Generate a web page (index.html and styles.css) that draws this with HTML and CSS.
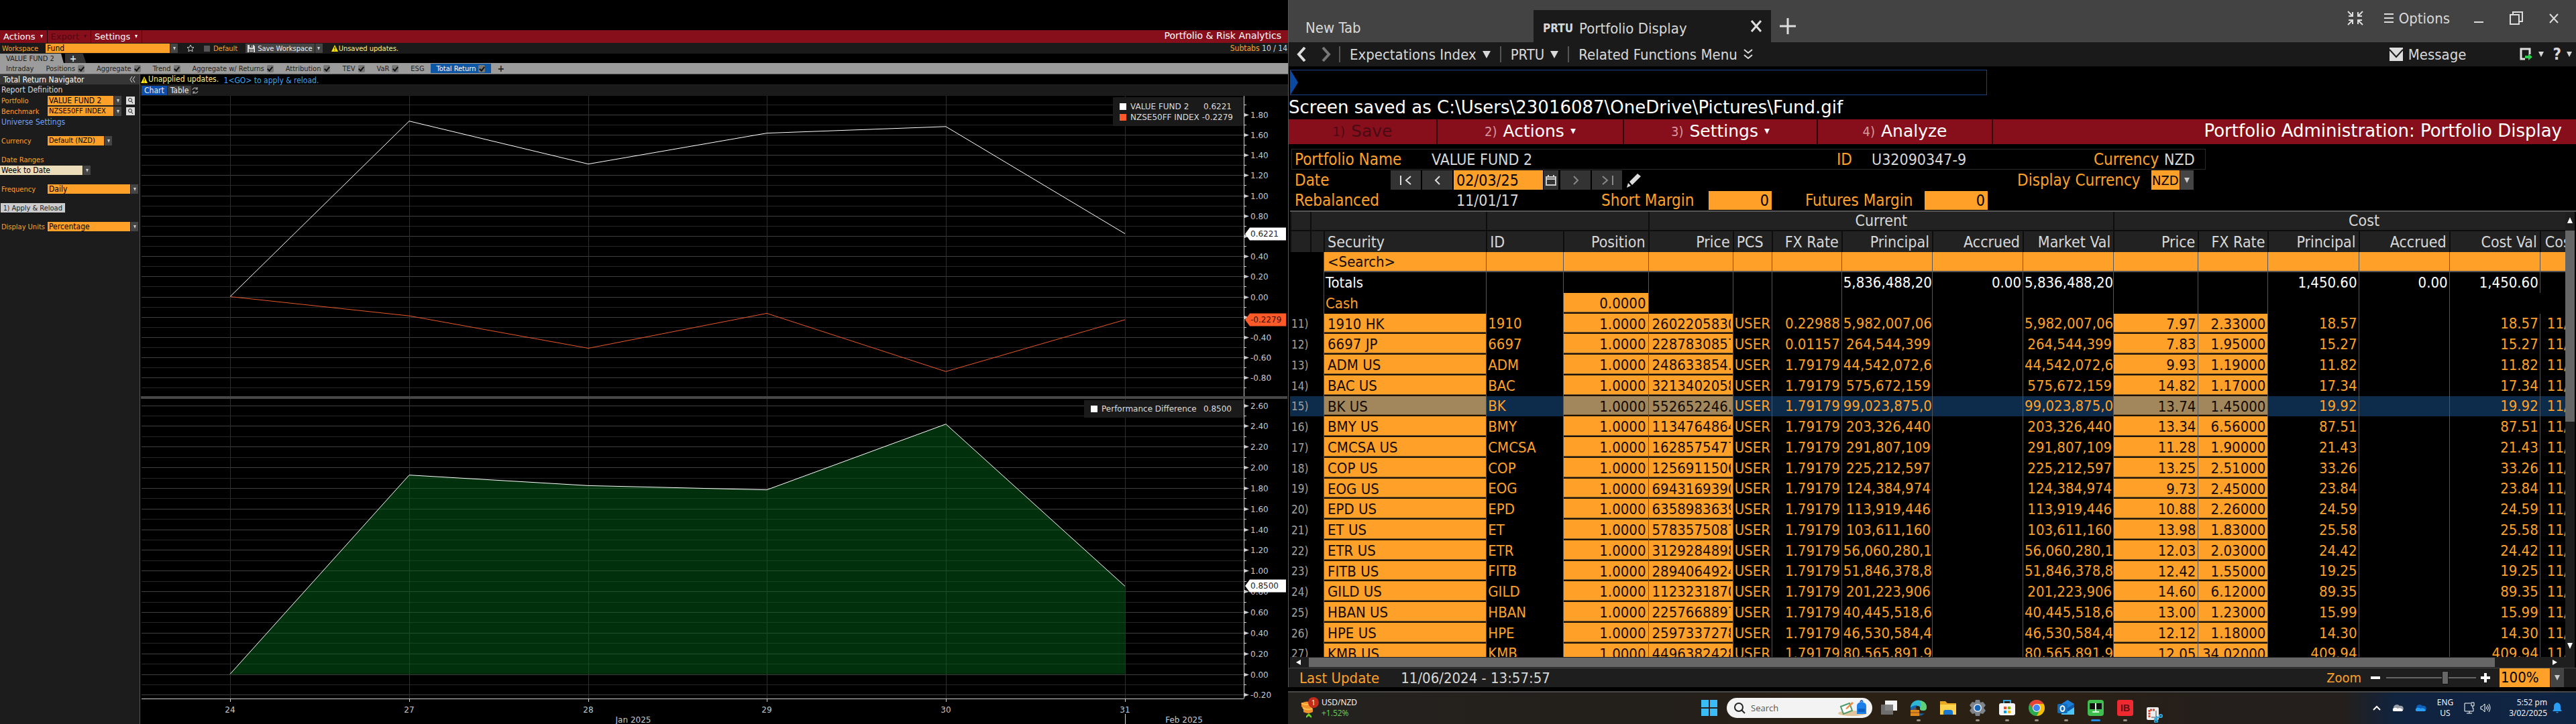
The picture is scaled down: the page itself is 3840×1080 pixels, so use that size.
FILE: index.html
```html
<!DOCTYPE html>
<html lang="en">
<head>
<meta charset="utf-8">
<title>Portfolio &amp; Risk Analytics</title>
<link rel="stylesheet" href="styles.css">
</head>
<body>
<main class="desktop">

<section class="analytics">
  <header class="menubar">
    <button class="menu-item">Actions <i class="caret"></i></button>
    <button class="menu-item menu-item-off" disabled>Export <i class="caret"></i></button>
    <button class="menu-item">Settings <i class="caret"></i></button>
    <h1 class="app-title">Portfolio &amp; Risk Analytics</h1>
  </header>
  <div class="workspace">
    <label class="amber workspace-label" for="workspace">Workspace</label>
    <span class="combo combo-workspace"><select id="workspace"><option>Fund</option></select><i class="drop"></i></span>
    <button class="icon-button star" aria-label="Favourite"><svg width="12" height="12" viewBox="0 0 12 12"><path d="M6 1l1.5 3.3 3.5.4-2.600 2.400.7 3.600L6 9l-3.100 1.700.7-3.600L1 4.700l3.500-.4z" fill="none" stroke="#ccc"/></svg></button>
    <label class="amber default-box"><input type="checkbox" class="tick">Default</label>
    <span class="save-group"><button class="save"><svg width="11" height="11" viewBox="0 0 11 11"><path d="M0 0h9l2 2v9H0z" fill="#ddd"/><path d="M3 0h5v4H3zM2 6h7v5H2z" fill="#444"/><path d="M6 1h1v2H6zM3 7h5v1H3zM3 9h5v1H3z" fill="#ddd"/></svg>Save Workspace</button><i class="drop"></i></span>
    <span class="warning"><svg width="10" height="10" viewBox="0 0 10 10"><path d="M5 0l5 10H0z" fill="#ffe600"/><path d="M4.500 3h1v4h-1zM4.500 8h1v1h-1z" fill="#000"/></svg>Unsaved updates.</span>
    <span class="subtab-count"><span class="amber">Subtabs</span> 10 / 14</span>
  </div>
  <div class="tabs">
    <button class="tab">VALUE FUND 2</button>
    <button class="tab tab-add" aria-label="Add tab">+</button>
  </div>
  <nav class="subtabs">
    <button class="subtab">Intraday</button>
    <button class="subtab">Positions<i class="check"></i></button>
    <button class="subtab">Aggregate<i class="check"></i></button>
    <button class="subtab">Trend<i class="check"></i></button>
    <button class="subtab">Aggregate w/ Returns<i class="check"></i></button>
    <button class="subtab">Attribution<i class="check"></i></button>
    <button class="subtab">TEV<i class="check"></i></button>
    <button class="subtab">VaR<i class="check"></i></button>
    <button class="subtab">ESG</button>
    <button class="subtab subtab-on">Total Return<i class="check"></i></button>
    <button class="subtab subtab-add" aria-label="Add subtab">+</button>
  </nav>
  <div class="workarea">
    <aside class="navigator">
      <h2 class="navigator-title">Total Return Navigator <button class="icon-button" aria-label="Collapse"><svg width="9" height="9" viewBox="0 0 9 9"><path d="M4 0L1 4.500 4 9M8 0L5 4.500 8 9" fill="none" stroke="#ddd"/></svg></button></h2>
      <p class="nav-row">Report Definition</p>
      <div class="nav-row"><label class="amber" for="portfolio">Portfolio</label><span class="combo w-110"><select id="portfolio"><option>VALUE FUND 2</option></select><i class="drop"></i></span><button class="lookup" aria-label="Find portfolio"><svg width="13" height="12" viewBox="0 0 13 12"><circle cx="6" cy="5" r="2.500" fill="none" stroke="#222"/><path d="M8 7l2 3" stroke="#222"/></svg></button></div>
      <div class="nav-row"><label class="amber" for="benchmark">Benchmark</label><span class="combo w-110"><select id="benchmark"><option>NZSE50FF INDEX</option></select><i class="drop"></i></span><button class="lookup" aria-label="Find benchmark"><svg width="13" height="12" viewBox="0 0 13 12"><circle cx="6" cy="5" r="2.500" fill="none" stroke="#222"/><path d="M8 7l2 3" stroke="#222"/></svg></button></div>
      <p class="nav-row"><a href="#universe">Universe Settings</a></p>
      <div class="nav-row spaced"><label class="amber" for="currency">Currency</label><span class="combo w-96"><select id="currency"><option>Default (NZD)</option></select><i class="drop"></i></span></div>
      <div class="nav-row spaced"><label class="amber" for="range">Date Ranges</label></div>
      <div class="nav-row"><span class="combo combo-pale w-135"><select id="range"><option>Week to Date</option></select><i class="drop"></i></span></div>
      <div class="nav-row spaced"><label class="amber" for="frequency">Frequency</label><span class="combo w-135"><select id="frequency"><option>Daily</option></select><i class="drop"></i></span></div>
      <div class="nav-row spaced"><button class="apply"><small>1)</small> Apply &amp; Reload</button></div>
      <div class="nav-row spaced"><label class="amber" for="units">Display Units</label><span class="combo w-135"><select id="units"><option>Percentage</option></select><i class="drop"></i></span></div>
    </aside>
    <div class="report">
      <p class="notice"><span class="warning"><svg width="10" height="10" viewBox="0 0 10 10"><path d="M5 0l5 10H0z" fill="#ffe600"/><path d="M4.500 3h1v4h-1zM4.500 8h1v1h-1z" fill="#000"/></svg>Unapplied updates.</span> <span class="hint">1&lt;GO&gt; to apply &amp; reload.</span></p>
      <div class="views">
        <button class="view view-on">Chart</button><button class="view">Table</button>
        <button class="icon-button" aria-label="Refresh"><svg width="10" height="10" viewBox="0 0 10 10"><path d="M1 4a4 4 0 0 1 7-1.500V0M8.500 3H5.500M9 6a4 4 0 0 1-7 1.500V10M1.500 7h3" fill="none" stroke="#ccc"/></svg></button>
      </div>
      <svg class="chart" id="chart" viewBox="0 0 1711 937" role="img" aria-label="Total return and performance difference"></svg>
    </div>
  </div>
</section>

<section class="right">
  <div class="window">
    <header class="titlebar">
      <button class="wtab">New Tab</button>
      <div class="wtab wtab-on"><b>PRTU</b> <span>Portfolio Display</span>
        <button class="icon-button wtab-close" aria-label="Close tab"><svg width="16" height="18" viewBox="0 0 16 18"><path d="M1 1l14 16M15 1L1 17" stroke="#ddd" stroke-width="3"/></svg></button></div>
      <button class="icon-button add-tab" aria-label="New tab"><svg width="24" height="24" viewBox="0 0 24 24"><path d="M12 0v24M0 12h24" stroke="#ddd" stroke-width="3"/></svg></button>
      <div class="window-tools">
        <button class="icon-button" aria-label="Compact"><svg width="24" height="22" viewBox="0 0 24 22"><path d="M1 1l7 7M23 1l-7 7M1 21l7-7M23 21l-7-7M8 2v6H2M16 2v6h6M8 20v-6H2M16 20v-6h6" fill="none" stroke="#ddd" stroke-width="2"/></svg></button>
        <button class="icon-button options"><svg width="14" height="15" viewBox="0 0 14 15"><path d="M0 1h14M0 7h14M0 13h14" stroke="#ddd" stroke-width="2"/></svg>Options</button>
        <button class="icon-button" aria-label="Minimize"><svg width="14" height="20" viewBox="0 0 14 20"><path d="M0 16h14" stroke="#ddd" stroke-width="2"/></svg></button>
        <button class="icon-button" aria-label="Restore"><svg width="20" height="20" viewBox="0 0 20 20"><path d="M1 5h13v14H1zM5 5V1h14v14h-5" fill="none" stroke="#ddd" stroke-width="2"/></svg></button>
        <button class="icon-button" aria-label="Close"><svg width="14" height="15" viewBox="0 0 14 15"><path d="M1 1l12 13M13 1L1 14" stroke="#ddd" stroke-width="2"/></svg></button>
      </div>
    </header>
    <nav class="toolbar">
      <button class="icon-button" aria-label="Back"><svg width="14" height="22" viewBox="0 0 14 22"><path d="M12 1L3 11l9 10" fill="none" stroke="#ddd" stroke-width="4"/></svg></button>
      <button class="icon-button forward" aria-label="Forward"><svg width="14" height="22" viewBox="0 0 14 22"><path d="M2 1l9 10-9 10" fill="none" stroke="#777" stroke-width="4"/></svg></button>
      <button class="crumb">Expectations Index <i class="caret caret-lg"></i></button>
      <button class="crumb">PRTU <i class="caret caret-lg"></i></button>
      <button class="crumb">Related Functions Menu <svg width="14" height="16" viewBox="0 0 14 16"><path d="M1 1l6 5 6-5M1 9l6 5 6-5" fill="none" stroke="#ddd" stroke-width="2"/></svg></button>
      <div class="toolbar-end">
        <button class="icon-button message"><svg width="20" height="20" viewBox="0 0 20 20"><path d="M0 0h20v20H0z" fill="#ddd"/><path d="M0 3l10 11L20 3" fill="none" stroke="#1a1a1a" stroke-width="2"/></svg>Message</button>
        <button class="icon-button export" aria-label="Export"><svg width="20" height="20" viewBox="0 0 20 20"><path d="M8 17H2V2h13v8" fill="none" stroke="#ddd" stroke-width="3"/><path d="M8 12h5V9l6 5-6 5v-3H8z" fill="#2fcf4f"/></svg><i class="caret caret-md"></i></button>
        <button class="icon-button help" aria-label="Help"><b>?</b><i class="caret caret-md"></i></button>
      </div>
    </nav>
    <div class="command"><i class="command-arrow"></i><input type="text" aria-label="Command line"></div>
    <p class="message-line">Screen saved as C:\Users\23016087\OneDrive\Pictures\Fund.gif</p>
    <div class="redbar">
      <button class="redbar-item w-220 redbar-off" disabled><small>1)</small> Save</button>
      <button class="redbar-item w-278"><small>2)</small> Actions <i class="caret caret-md"></i></button>
      <button class="redbar-item w-289"><small>3)</small> Settings <i class="caret caret-md"></i></button>
      <button class="redbar-item w-261"><small>4)</small> Analyze</button>
      <h2>Portfolio Administration: Portfolio Display</h2>
    </div>
    <div class="details">
      <div class="detail-row row-name"><span class="amber">Portfolio Name</span><span>VALUE FUND 2</span><span class="amber">ID</span><span>U32090347-9</span><span class="amber">Currency</span><span>NZD</span></div>
      <div class="detail-row row-date"><label class="amber" for="date">Date</label>
        <span class="date-nav">
          <button class="step" aria-label="First"><svg width="18" height="14" viewBox="0 0 18 14"><path d="M1 0v14M16 1l-7 6 7 6" fill="none" stroke="#ddd" stroke-width="2"/></svg></button>
          <button class="step" aria-label="Previous"><svg width="10" height="14" viewBox="0 0 10 14"><path d="M8 1L2 7l6 6" fill="none" stroke="#ddd" stroke-width="2"/></svg></button>
          <span class="date-field"><input id="date" type="text" value="02/03/25"><button class="calendar" aria-label="Calendar"><svg width="16" height="16" viewBox="0 0 16 16"><path d="M1 3h14v12H1zM1 6h14M4 0v4M12 0v4" fill="none" stroke="#ccc" stroke-width="2"/></svg></button></span>
          <button class="step" aria-label="Next"><svg width="10" height="14" viewBox="0 0 10 14"><path d="M2 1l6 6-6 6" fill="none" stroke="#888" stroke-width="2"/></svg></button>
          <button class="step" aria-label="Last"><svg width="18" height="14" viewBox="0 0 18 14"><path d="M17 0v14M2 1l7 6-7 6" fill="none" stroke="#888" stroke-width="2"/></svg></button>
          <button class="icon-button pencil" aria-label="Edit"><svg width="22" height="22" viewBox="0 0 22 22"><path d="M0 22l2-7 4 4zM4 13L16 1l5 4L8 18z" fill="#ddd"/></svg></button>
        </span>
        <label class="amber" for="display-currency">Display Currency</label>
        <span class="combo combo-lg combo-currency"><select id="display-currency"><option>NZD</option></select><i class="drop"></i></span></div>
      <div class="detail-row row-margin"><span class="amber">Rebalanced</span><span>11/01/17</span><label class="amber" for="short-margin">Short Margin</label><input class="field" id="short-margin" type="text" value="0"><label class="amber" for="futures-margin">Futures Margin</label><input class="field" id="futures-margin" type="text" value="0"></div>
    </div>
    <div class="grid">
      <div class="grid-view">
        <table class="holdings">
          <colgroup><col class="c-num"><col class="c-gap"><col class="c-security"><col class="c-id"><col class="c-position"><col class="c-price"><col class="c-pcs"><col class="c-fx"><col class="c-money"><col class="c-money"><col class="c-money"><col class="c-price"><col class="c-fx"><col class="c-money"><col class="c-money"><col class="c-money"><col class="c-last"></colgroup>
          <thead>
            <tr class="groups"><th></th><th colspan="2"></th><th colspan="2"></th><th colspan="6">Current</th><th colspan="6" class="cost-group">Cost</th></tr>
            <tr class="heads"><th></th><th></th><th class="l">Security</th><th class="l">ID</th><th>Position</th><th>Price</th><th class="l">PCS</th><th>FX Rate</th><th>Principal</th><th>Accrued</th><th>Market Val</th><th>Price</th><th>FX Rate</th><th>Principal</th><th>Accrued</th><th>Cost Val</th><th class="l last">Cos</th></tr>
          </thead>
          <tbody id="rows">
            <tr class="search"><td></td><td></td><td><input type="text" value="&lt;Search&gt;" aria-label="Search security"></td><td></td><td></td><td></td><td></td><td></td><td></td><td></td><td></td><td></td><td></td><td></td><td></td><td></td><td></td></tr>
            <tr class="totals"><td></td><td></td><td class="l">Totals</td><td></td><td></td><td></td><td></td><td></td><td>5,836,488,20</td><td>0.00</td><td>5,836,488,20</td><td></td><td></td><td>1,450.60</td><td>0.00</td><td>1,450.60</td><td></td></tr>
            <tr><td></td><td></td><td class="l">Cash</td><td></td><td class="edit"><input class="r" type="text" value="0.0000" aria-label="Cash position"></td><td></td><td></td><td></td><td></td><td></td><td></td><td></td><td></td><td></td><td></td><td></td></tr>
          </tbody>
        </table>
      </div>
      <div class="vscroll"><i class="tri tri-up"></i><i class="vthumb"></i><i class="tri tri-down"></i></div>
      <div class="hscroll"><i class="tri tri-left"></i><i class="hthumb"></i><i class="tri tri-right"></i></div>
    </div>
    <footer class="status">
      <span class="amber">Last Update</span><span class="stamp">11/06/2024 - 13:57:57</span>
      <div class="zoom"><label class="amber" for="zoom">Zoom</label><button class="icon-button" aria-label="Zoom out"><svg width="14" height="14" viewBox="0 0 14 14"><path d="M0 7h14" stroke="#fff" stroke-width="4"/></svg></button><input type="range" id="zoom" min="0" max="100" value="67"><button class="icon-button" aria-label="Zoom in"><svg width="14" height="14" viewBox="0 0 14 14"><path d="M0 7h14M7 0v14" stroke="#fff" stroke-width="4"/></svg></button><span class="combo combo-lg combo-zoom"><select aria-label="Zoom level"><option>100%</option></select><i class="drop"></i></span></div>
    </footer>
  </div>

  <footer class="taskbar">
    <div class="widget"><svg width="28" height="32" viewBox="0 0 28 32"><path d="M1 9q8-5 16 0v4l-2 1 3 3v5q-7 4-14 0v-5L1 14z" fill="#f0932b"/><path d="M1 9q8 4 16 0M3 16q8 4 14 1" fill="none" stroke="#ffc04d" stroke-width="2"/><circle cx="19" cy="8" r="8" fill="#c42b1c"/><path d="M8 31v-3l4-4 4 4v3l-4-3z" fill="#6bd425"/><text x="19" y="12" text-anchor="middle" class="badge">1</text></svg><span>USD/NZD<br><em>+1.52%</em></span></div>
    <div class="apps">
      <button class="icon-button start" aria-label="Start"><svg width="24" height="24" viewBox="0 0 24 24"><path d="M0 0h11v11H0zM13 0h11v11H13zM0 13h11v11H0zM13 13h11v11H13z" fill="#3cbcf7"/></svg></button>
      <label class="pill"><svg width="18" height="18" viewBox="0 0 18 18"><circle cx="8" cy="8" r="6" fill="none" stroke="#222" stroke-width="2"/><path d="M12 12l5 5" stroke="#222" stroke-width="2"/></svg><input type="text" value="Search" aria-label="Search"><svg width="44" height="24" viewBox="0 0 44 24"><ellipse cx="21" cy="20" rx="21" ry="4" fill="#e2c49c"/><path d="M4 10l13-5 4 11-13 5z" fill="#fff" stroke="#4a9a6a" stroke-width="2"/><path d="M11 13L21 3l2 2-10 9z" fill="#f08a3c"/><path d="M28 9q0-5 7-6 7 1 7 6v12H28z" fill="#1a7fe8"/><path d="M30 13h10v5H30z" fill="#0f5fc0"/><path d="M33 3q2-4 4 0" fill="none" stroke="#1a5fc0" stroke-width="2"/></svg></label>
      <button class="app" aria-label="Task view"><svg width="26" height="24" viewBox="0 0 26 24"><path d="M7 1h18v15H7z" fill="#f4f4f4"/><path d="M1 7h18v15H1z" fill="#777" fill-opacity=".9"/></svg></button>
      <button class="app app-open" aria-label="Edge"><svg width="26" height="24" viewBox="0 0 26 24"><path d="M1 12A12 11 0 0 1 25 11q0 5-5 5-5 0-5-3 1-4-4-4-7 0-10 3z" fill="#2fb8d6"/><path d="M14 1q11 1 11 10 0 5-5 5-5 0-5-3 4-8-1-12z" fill="#5fd07a"/><path d="M1 12q3-4 10-4-4 4-1 9 4 5 12 3-4 4-10 4Q1 22 1 12z" fill="#1467b8"/><path d="M1 15h13v9H1z" fill="#e08a1e"/><path d="M5 15v-2h5v2M1 19h13" fill="none" stroke="#8a4a10"/></svg></button>
      <button class="app" aria-label="File Explorer"><svg width="26" height="24" viewBox="0 0 26 24"><path d="M1 2h8l3 3h13v17H1z" fill="#e8a820"/><path d="M1 7h24v15H1z" fill="#ffd34d"/><path d="M6 22v-5l2-2h10l2 2v5z" fill="#1a78d0"/></svg></button>
      <button class="app app-open" aria-label="Settings"><svg width="26" height="24" viewBox="0 0 26 24"><path d="M10 0h6l1 4 4-1 4 5-3 4 3 4-4 5-4-1-1 4h-6l-1-4-4 1-4-5 3-4-3-4 4-5 4 1z" fill="#7d848c"/><circle cx="13" cy="12" r="6" fill="#e8eef4"/><circle cx="13" cy="12" r="4.500" fill="#1568b8"/></svg></button>
      <button class="app app-open" aria-label="Microsoft Store"><svg width="26" height="24" viewBox="0 0 26 24"><path d="M8 6V1h10v5" fill="none" stroke="#2fa8e0" stroke-width="2"/><rect x="1" y="5" width="24" height="18" rx="3" fill="#f6f6f6"/><path d="M8 10h4v4H8z" fill="#f04e23"/><path d="M14 10h4v4h-4z" fill="#7fba00"/><path d="M8 16h4v4H8z" fill="#00a1f1"/><path d="M14 16h4v4h-4z" fill="#ffb900"/></svg></button>
      <button class="app app-open" aria-label="Chrome"><svg width="26" height="24" viewBox="0 0 26 24"><circle cx="13" cy="12" r="12" fill="#2da94f"/><path d="M2.600 6A12 12 0 0 1 23.400 6H13L8 15z" fill="#ea4335"/><path d="M23.400 6A12 12 0 0 1 13 24l5-9-5-9z" fill="#fbbc04"/><circle cx="13" cy="12" r="6" fill="#fff"/><circle cx="13" cy="12" r="5" fill="#4285f4"/></svg></button>
      <button class="app app-open" aria-label="Outlook"><svg width="26" height="24" viewBox="0 0 26 24"><path d="M6 6l9-6 10 6v16H6z" fill="#1a7fd8"/><path d="M6 12l10 5 9-7v12H6z" fill="#4cc4f4"/><path d="M25 6v5l-9 6-4-3z" fill="#0f5aa8"/><rect x="0" y="6" width="15" height="14" rx="2" fill="#0f6cbd"/><ellipse cx="7.500" cy="13" rx="3" ry="4" fill="none" stroke="#fff" stroke-width="2"/></svg></button>
      <button class="app app-active" aria-label="Terminal"><svg width="26" height="24" viewBox="0 0 26 24"><rect x="1" y="0" width="24" height="24" rx="4" fill="#3fbf4f"/><path d="M4 5h18v9H4z" fill="#111"/><path d="M13 5v12M8 18h10" stroke="#dfd" stroke-width="2"/></svg></button>
      <button class="app app-open" aria-label="IB"><svg width="26" height="24" viewBox="0 0 26 24"><rect x="1" y="0" width="24" height="24" rx="3" fill="#ee2a30"/><text x="13" y="17" text-anchor="middle" class="ib">IB</text></svg></button>
      <button class="app app-low" aria-label="Snipping Tool"><svg width="26" height="24" viewBox="0 0 26 24"><rect x="1" y="1" width="18" height="19" rx="2" fill="#eee"/><path d="M5 16V5h9" fill="none" stroke="#e0442a" stroke-width="3" stroke-dasharray="3 1"/><path d="M15 6v10H8" fill="none" stroke="#999" stroke-width="2"/><path d="M12 19l9-4M16 14v8" stroke="#2fa8e0" stroke-width="2"/><circle cx="22" cy="14" r="2" fill="none" stroke="#2fa8e0" stroke-width="2"/><circle cx="15" cy="22" r="2" fill="none" stroke="#2fa8e0" stroke-width="2"/></svg></button>
    </div>
    <div class="tray">
      <button class="icon-button" aria-label="Show hidden icons"><svg width="12" height="8" viewBox="0 0 12 8"><path d="M1 7l5-5 5 5" fill="none" stroke="#fff" stroke-width="2"/></svg></button>
      <svg width="18" height="12" viewBox="0 0 18 12"><path d="M3 11a3 3 0 0 1 0-5 5 5 0 0 1 9-3 4 4 0 0 1 3 8z" fill="#9aa0a8"/><path d="M3 11a3 3 0 0 1 1-5q3-1 5 1 5-2 8 2 0 2-2 2z" fill="#fff"/></svg>
      <svg width="18" height="12" viewBox="0 0 18 12"><path d="M3 11a3 3 0 0 1 0-5 5 5 0 0 1 9-3 4 4 0 0 1 3 8z" fill="#0f5fb8"/><path d="M3 11a3 3 0 0 1 1-5q3-1 5 1 5-2 8 2 0 2-2 2z" fill="#2a9df4"/></svg>
      <span class="lang">ENG<br>US</span>
      <svg width="17" height="18" viewBox="0 0 17 18"><path d="M10 2H1v12h13V9M4 17h8M8 14v3M11 1h4v5h-4zM13 6v4" fill="none" stroke="#fff"/></svg>
      <svg class="speaker" width="16" height="14" viewBox="0 0 16 14"><path d="M1 5h2l4-4v12L3 9H1zM9 5q2 2 0 4M11 3q3 4 0 8M13 1q4 6 0 12" fill="none" stroke="#fff"/></svg>
      <span class="clock">5:52 pm<br>3/02/2025</span>
      <svg width="14" height="16" viewBox="0 0 14 16"><path d="M7 0q5 1 5 6v4l2 3H0l2-3V6q0-5 5-6zM5 14h4q-2 3-4 0z" fill="#2a9df4"/></svg>
    </div>
  </footer>
</section>
</main>
<script src="app.js"></script>
</body>
</html>
```
FILE: styles.css
```css
* { box-sizing: border-box; }
html, body { margin: 0; height: 100%; background: #000; }
body, button, input, select { font-family: "DejaVu Sans Condensed", "DejaVu Sans", Verdana, sans-serif; color: #d8d8d8; }
body { overflow: hidden; }
h1, h2, p { margin: 0; font-weight: 400; }
button, input, select { border: 0; padding: 0; margin: 0; border-radius: 0; background: none; font-size: inherit; appearance: none; outline: 0; }
button { white-space: nowrap; }
svg { display: block; flex: none; }
.amber { color: #ffa028; }
.icon-button { display: flex; align-items: center; }
.caret { display: inline-block; width: 0; height: 0; border: solid transparent; border-width: 5px 2px 0; border-top-color: currentColor; }
.caret-md { border-width: 8px 4px 0; }
.caret-lg { border-width: 11px 6px 0; }
.desktop { display: grid; grid-template-columns: minmax(0, 1fr) minmax(0, 1fr); height: 100vh; }

/* Analytics screen */
.analytics { padding-top: 45px; font-size: 11px; overflow: hidden; }
.menubar { display: flex; height: 19px; background: #870f1c; color: #fff; }
.menu-item { display: flex; align-items: center; gap: 7px; padding: 0 6px 1px 5px; border-right: 1px solid #1c0508; font: 13px "DejaVu Sans", sans-serif; color: #fff; }
.menu-item-off { color: #4c0a14; }
.app-title { margin-left: auto; padding-right: 10px; font: 14px/17px "DejaVu Sans", sans-serif; }
.workspace { display: flex; align-items: center; height: 16px; background: #1a1a1a; white-space: nowrap; }
.workspace-label { width: 68px; padding-left: 3px; }
.combo { display: flex; height: 14px; }
.combo select { flex: 1; min-width: 0; padding-left: 2px; background: #ffa028; color: #000; font-size: 12px; line-height: 14px; }
.drop { display: flex; flex: none; align-items: center; justify-content: center; width: 11px; margin-left: 1px; background: #444; }
.drop::before { content: ""; border: solid transparent; border-width: 5px 2px 0; border-top-color: #ccc; }
.combo-workspace { width: 197px; }
.combo-pale select { background: #ebdcba; }
.star { margin-left: 13px; }
.default-box { display: flex; align-items: center; gap: 5px; margin-left: 14px; }
.tick { width: 9px; height: 9px; background: #555; }
.save-group { display: flex; height: 14px; margin-left: 12px; }
.save { display: flex; align-items: center; gap: 4px; padding: 0 3px; background: #444; color: #eee; }
.warning { display: inline-flex; align-items: center; gap: 1px; color: #ffef8a; }
.workspace .warning { margin-left: 13px; }
.subtab-count { margin-left: auto; padding-right: 1px; font-size: 12px; }
.tabs { display: flex; gap: 2px; height: 14px; }
.tab { padding: 0 14px 0 9px; background: #9c9c9c; color: #1a1a1a; clip-path: polygon(0 0, 96% 0, 100% 100%, 0 100%); }
.tab-add { padding: 0 14px 0 7px; background: #333; color: #ddd; font-size: 14px; line-height: 12px; font-weight: 700; clip-path: polygon(0 0, 85% 0, 100% 100%, 0 100%); }
.subtabs { display: flex; height: 17px; padding: 1px 0; background: #9c9c9c; border-bottom: 1px solid #555; }
.subtab { display: flex; align-items: center; gap: 4px; padding: 0 9px; color: #222; }
.subtab-on { background: #0d56a6; color: #fff; }
.subtab-add { font-size: 14px; font-weight: 700; }
.check { width: 10px; height: 11px; border-radius: 2px; background: #777; display: flex; align-items: center; justify-content: center; }
.check::before { content: ""; width: 3px; height: 6px; border: solid #111; border-width: 0 2px 2px 0; transform: rotate(40deg); }
.workarea { display: flex; }
.navigator { flex: none; width: 209px; height: calc(100vh - 111px); background: #1c1c1c; border-right: 1px solid #555; font-size: 12px; }
.navigator-title { display: flex; align-items: center; justify-content: space-between; height: 15px; padding: 0 6px 0 5px; background: #363636; color: #fff; font-size: 12px; }
.nav-row { display: flex; align-items: center; height: 16px; padding-left: 2px; white-space: nowrap; }
.nav-row > label { width: 69px; font-size: 11px; }
.nav-row a { color: #6ea0ff; text-decoration: none; font-size: 12px; }
.nav-row .combo-pale { margin-left: -2px; }
.spaced { margin-top: 12px; }
.w-110 { width: 110px; }
.w-96 { width: 96px; }
.w-135 { width: 135px; }
.nav-row .combo select { font-size: 12px; }
.nav-row #benchmark, .nav-row #currency { font-size: 11px; }
.lookup { margin-left: 7px; background: #ddd; }
.apply { height: 14px; margin-left: -1px; padding: 0 4px; background: #ccc; color: #222; font-size: 11px; }
.apply small { font-size: 10px; }
.report { flex: 1; min-width: 0; }
.notice { height: 15px; padding-left: 1px; font-size: 12px; line-height: 15px; }
.hint { margin-left: 4px; color: #3fa4ee; }
.views { display: flex; align-items: center; height: 17px; padding-left: 2px; background: #1a1a1a; border-top: 1px solid #222; }
.view { height: 14px; padding: 0 4px; background: #3a3a3a; color: #eee; font-size: 12px; margin-right: 1px; }
.view-on { background: #0a4fae; }
.chart { width: 100%; height: auto; font: 12px "DejaVu Sans", sans-serif; }
.grid-major { stroke: #3e3e3e; }
.grid-minor { stroke: #262626; }
.grid-v { stroke: #2e2e2e; }
.tick-label { fill: #c8c8c8; }
.axis { stroke: #d0d0d0; }
.tick-mark { fill: #ccc; }
.legend { fill: #1a1a1a; }
.legend-text { fill: #ddd; }
.series { fill: none; stroke-width: 1; }
.area { fill: #00641a; fill-opacity: .48; }
.split { fill: #484848; }

/* Portfolio window */
.right { display: flex; flex-direction: column; min-height: 0; height: 100vh; }
.window { display: flex; flex-direction: column; flex: 1; min-height: 0; border-left: 1px solid #555; font-size: 22px; white-space: nowrap; }
.titlebar { display: flex; height: 63px; background: #434343; }
.wtab { width: 365px; padding: 20px 0 0 25px; text-align: left; }
.wtab-on { display: flex; align-items: center; gap: 9px; width: 354px; margin-top: 15px; padding: 6px 14px 0; background: #1a1a1a; }
.wtab-on b { font-size: 17px; }
.wtab-close { margin: -6px 0 0 auto; }
.add-tab { margin: 27px 0 12px 13px; }
.window-tools { display: flex; align-items: center; margin-left: auto; height: 54px; gap: 31px; padding-right: 26px; }
.window-tools .icon-button { gap: 8px; }
.window-tools .icon-button:nth-child(4) { margin: 0 8px; }
.window-tools .icon-button:nth-child(3) { margin-left: 5px; }
.toolbar { display: flex; align-items: center; height: 36px; padding-left: 12px; background: #1a1a1a; }
.forward { margin: 0 12px 0 23px; }
.crumb { display: flex; align-items: center; gap: 9px; height: 24px; padding: 0 14px; border-left: 2px solid #555; }
.toolbar-end { display: flex; margin-left: auto; padding-right: 6px; }
.message { gap: 8px; margin-right: 80px; }
.export, .help { gap: 8px; margin-right: 13px; }
.help { margin-right: 0; font-size: 24px; }
.command { display: flex; width: 1039px; height: 38px; margin: 5px 0 0 2px; border: 1px solid #1b3f8f; }
.command-arrow { width: 11px; background: #0b4aa2; clip-path: polygon(0 0, 100% 50%, 0 100%); }
.command input { flex: 1; }
.message-line { height: 36px; color: #fff; font: 26px/36px "DejaVu Sans", sans-serif; }
.redbar { display: flex; height: 37px; background: #870f1c; font: 25px "DejaVu Sans", sans-serif; }
.redbar-item { display: flex; align-items: center; justify-content: center; gap: 9px; padding-bottom: 2px; border-right: 2px solid #2c060b; color: #fff; font-family: "DejaVu Sans", sans-serif; }
.redbar-item small { font: 20px "DejaVu Sans Condensed", sans-serif; color: #d79aa0; }
.redbar-off, .redbar-off small { color: #4c0a14; }
.w-220 { width: 222px; }
.w-278 { width: 278px; }
.w-289 { width: 289px; }
.w-261 { width: 261px; }
.redbar h2 { margin-left: auto; padding-right: 21px; font-size: 26px; line-height: 34px; color: #fff; }
.details { padding: 7px 0 0 4px; font-size: 23px; }
.detail-row { display: grid; align-items: center; height: 31px; padding-left: 5px; }
.detail-row .amber { font-size: 24px; line-height: 28px; }
.row-name { grid-template-columns: 204px 604px 52px 331px 105px auto; width: 1363px; border: 1px solid #2a2a2a; padding-left: 4px; }
.row-date { grid-template-columns: 143px 934px 200px auto; }
.row-margin { grid-template-columns: 241px 216px 160px 144px 178px auto; height: 30px; }
.date-nav { display: flex; gap: 2px; }
.step { display: flex; align-items: center; justify-content: center; width: 45px; height: 29px; background: #333; }
.date-field { display: flex; gap: 1px; }
.date-field input { width: 133px; padding-left: 4px; background: #ffa028; color: #000; }
.calendar { display: flex; align-items: center; justify-content: center; width: 22px; background: #333; margin-right: 1px; }
.pencil { margin-left: 5px; }
.field { width: 94px; height: 28px; padding-right: 4px; background: #ffa028; color: #000; text-align: right; }
.combo-lg { width: 63px; height: 29px; }
.combo-lg select { font-size: 22px; line-height: 28px; text-overflow: clip; }
.combo-currency select { padding-left: 1px; font-size: 20px; }
.combo-lg .drop { width: 20px; }
.combo-lg .drop::before { border-width: 8px 4px 0; }
.grid { display: grid; grid-template-columns: minmax(0, 1fr) 14px; grid-template-rows: minmax(0, 1fr) 16px; flex: 1; min-height: 0; margin-left: 2px; border-top: 2px solid #555; padding-right: 2px; }
.grid-view { overflow: hidden; }
.holdings { width: 100%; table-layout: fixed; border-spacing: 0; }
.c-num { width: 30px; }
.c-gap { width: 20px; }
.c-security { width: 242px; }
.c-id { width: 115px; }
.c-position, .c-price { width: 126px; }
.c-pcs { width: 58px; }
.c-fx { width: 104px; }
.c-money { width: 135px; }
.c-last { width: 38px; }
.holdings th { height: 31px; padding: 0 4px; background: #222; border-left: 2px solid #0d0d0d; font-size: 23px; font-weight: 400; line-height: 28px; text-align: right; overflow: hidden; }
.holdings .groups th { height: 29px; border-bottom: 2px solid #0d0d0d; line-height: 27px; text-align: center; }
.holdings .cost-group { padding-left: 76px; }
.holdings td { height: 31px; padding: 0 2px; border-left: 1px solid #555; color: #ffa028; line-height: 28px; text-align: right; overflow: hidden; }
.holdings tr:nth-child(4n) td { height: 30px; }
.holdings td:nth-child(-n+2) { border-left: 0; }
.holdings .l { text-align: left; }
.holdings .last { padding-left: 6px; }
.holdings td.last { padding-left: 10px; }
.holdings .num { color: #a0a0a0; font-size: 17px; text-align: left; }
.holdings td input { display: block; width: 100%; height: 28px; color: #120a00; padding: 0 5px; }
.holdings td input.r { text-align: right; padding: 0 3px 0 5px; }
.holdings .edit, .holdings .search td { padding: 0; }
.holdings .edit { background: #ffa028; box-shadow: inset 0 -2px #1c1104, inset 0 -3px #7a5c30; }
.holdings .search td { height: 30px; }
.search td:nth-child(n+3) { background: #ffa028; border-bottom: 2px solid #555; }
.holdings .totals td { color: #fff; }
.selected td { background: #0d2b4a; }
.holdings .selected .edit { background: #a3875c; }
.vscroll { display: flex; flex-direction: column; align-items: center; background: #1e1e1e; padding: 8px 0 12px; }
.vthumb { width: 14px; height: 285px; margin-top: 11px; background: #666; }
.tri { border: 4px solid transparent; }
.tri-up { border-bottom: 9px solid #fff; border-top: 0; }
.tri-down { border-top: 9px solid #fff; border-bottom: 0; margin-top: auto; }
.tri-left { border-right: 7px solid #fff; border-left: 0; }
.tri-right { border-left: 7px solid #fff; border-right: 0; }
.hscroll { display: flex; align-items: center; grid-column: 1 / -1; padding: 0 26px 0 9px; background: #1e1e1e; }
.hthumb { flex: 1; height: 14px; margin: 0 86px 0 12px; background: #666; }
.status { display: flex; align-items: center; height: 29px; padding: 0 18px 0 16px; background: #1e1e1e; border-top: 1px solid #444; }
.stamp { margin-left: 32px; }
.zoom { display: flex; align-items: center; gap: 14px; margin-left: auto; }
.zoom label { font-size: 20px; }
.zoom input { width: 134px; height: 20px; margin: 0 -7px 0 -5px; background: linear-gradient(#666, #666) center / 100% 2px no-repeat; }
.zoom input::-webkit-slider-thumb { appearance: none; width: 10px; height: 20px; background: #666; border: 1px solid #111; }
.combo-zoom { width: 96px; height: 28px; }

/* Taskbar */
.taskbar { display: grid; grid-template-columns: 1fr auto 1fr; align-items: center; height: 55px; border-top: 6px solid #000; background: linear-gradient(90deg, #24221f, #231f1b 30%, #2b2014 40%, #2b2014 60%, #241f1c 72%, #241f1c 82%, #10233f 86%, #0f2544); background-clip: padding-box; box-shadow: inset 0 2px #484848; font: 12px/16px "Open Sans", "Noto Sans", sans-serif; color: #fff; }
.widget { display: flex; align-items: center; gap: 3px; padding-left: 19px; }
.widget em { font-style: normal; color: #6fce5a; }
.badge { fill: #fff; font-size: 11px; }
.ib { fill: #5c1012; font: bold 14px "Liberation Sans", sans-serif; }
.apps { display: flex; align-items: center; margin-left: 10px; }
.start { margin-right: 14px; }
.pill { display: flex; align-items: center; gap: 8px; width: 217px; height: 30px; margin-right: 3px; padding: 0 7px 0 10px; border-radius: 15px; background: #f3f3f3; }
.pill input { flex: 1; min-width: 0; color: #555; font: 13px "Open Sans", sans-serif; }
.app { display: flex; flex-direction: column; align-items: center; gap: 5px; width: 44px; padding-top: 8px; }
.app::after { content: ""; width: 6px; height: 3px; border-radius: 2px; }
.app-open::after { background: #9a948c; }
.app-active::after { width: 14px; background: #1f8fe8; }
.app-low { padding-top: 20px; }
.app-low::after { display: none; }
.tray { display: flex; align-items: center; justify-content: flex-end; gap: 16px; padding-right: 21px; }
.lang { text-align: center; }
.speaker { margin-left: -9px; }
.clock { text-align: right; margin: 0 -8px 0 11px; }
```
FILE: app.js
```js
// Holdings: security, id, price, fx rate, value, cost price, cost fx, cost value
const holdings = [
  ["1910 HK", "1910", "2602205830", "0.22988", "5,982,007,06", "7.97", "2.33000", "18.57"],
  ["6697 JP", "6697", "2287830857", "0.01157", "264,544,399", "7.83", "1.95000", "15.27"],
  ["ADM US", "ADM", "248633854.", "1.79179", "44,542,072,6", "9.93", "1.19000", "11.82"],
  ["BAC US", "BAC", "3213402058", "1.79179", "575,672,159", "14.82", "1.17000", "17.34"],
  ["BK US", "BK", "552652246.", "1.79179", "99,023,875,0", "13.74", "1.45000", "19.92"],
  ["BMY US", "BMY", "1134764864", "1.79179", "203,326,440", "13.34", "6.56000", "87.51"],
  ["CMCSA US", "CMCSA", "1628575477", "1.79179", "291,807,109", "11.28", "1.90000", "21.43"],
  ["COP US", "COP", "1256911506", "1.79179", "225,212,597", "13.25", "2.51000", "33.26"],
  ["EOG US", "EOG", "6943169390", "1.79179", "124,384,974", "9.73", "2.45000", "23.84"],
  ["EPD US", "EPD", "6358983639", "1.79179", "113,919,446", "10.88", "2.26000", "24.59"],
  ["ET US", "ET", "5783575087", "1.79179", "103,611,160", "13.98", "1.83000", "25.58"],
  ["ETR US", "ETR", "3129284898", "1.79179", "56,060,280,1", "12.03", "2.03000", "24.42"],
  ["FITB US", "FITB", "2894064924", "1.79179", "51,846,378,8", "12.42", "1.55000", "19.25"],
  ["GILD US", "GILD", "1123231870", "1.79179", "201,223,906", "14.60", "6.12000", "89.35"],
  ["HBAN US", "HBAN", "2257668897", "1.79179", "40,445,518,6", "13.00", "1.23000", "15.99"],
  ["HPE US", "HPE", "2597337278", "1.79179", "46,530,584,4", "12.12", "1.18000", "14.30"],
  ["KMB US", "KMB", "4496382428", "1.79179", "80,565,891,9", "12.05", "34.02000", "409.94"]
];
const selected = "BK";

const edit = (value, label, align = "r") =>
  `<td class="edit"><input class="${align}" type="text" value="${value}" aria-label="${label}"></td>`;

document.getElementById("rows").insertAdjacentHTML("beforeend", holdings.map((h, i) => {
  const [name, id, price, fx, value, costPrice, costFx, cost] = h;
  return `<tr${id === selected ? ' class="selected"' : ""}><td class="num">${i + 11})</td><td></td>` +
    edit(name, "Security", "s") + `<td class="l">${id}</td>` + edit("1.0000", `${id} position`) +
    edit(price, `${id} price`) + `<td class="l">USER</td><td>${fx}</td><td>${value}</td><td></td><td>${value}</td>` +
    edit(costPrice, `${id} cost price`) + edit(costFx, `${id} cost FX rate`) +
    `<td>${cost}</td><td></td><td>${cost}</td><td class="l last">11/</td></tr>`;
}).join(""));

// Chart: two stacked plots that share one date axis
const days = [["24", 134], ["27", 401], ["28", 668], ["29", 934], ["30", 1201], ["31", 1468]];
const axisX = 1645;
// covered: tick values (in tenths) whose label gives way to a value tag
const plots = [
  { top: 0, bottom: 448, zero: 299.5, unit: 151, min: -9, max: 19, covered: [6, -2] },
  { top: 452, bottom: 899, zero: 862.5, unit: 154.2, min: -2, max: 26, covered: [] }
];
const y = (plot, value) => plot.zero - plot.unit * value;
const path = (plot, values) => values.map((v, i) => `${days[i][1]},${y(plot, v)}`).join(" ");
const line = (x1, y1, x2, y2, cls) => `<line x1="${x1}" y1="${y1}" x2="${x2}" y2="${y2}" class="${cls}"/>`;
const text = (x, ty, s, cls, anchor = "start") => `<text x="${x}" y="${ty}" class="${cls}" text-anchor="${anchor}">${s}</text>`;
const tag = (plot, value, fill, ink) => {
  const ty = Math.round(y(plot, value));
  return `<path d="M${axisX + 2} ${ty}l7-9.500h54v19h-54z" fill="${fill}"/><text x="${axisX + 10}" y="${ty + 4}" fill="${ink}">${value.toFixed(4)}</text>`;
};

let svg = "";
for (const plot of plots) {
  for (let t = plot.min; t <= plot.max; t++) {
    const ty = Math.round(y(plot, t / 10)) + 0.5;
    const major = t % 2 === 0;
    svg += line(2, ty, axisX, ty, major ? "grid-major" : "grid-minor");
    if (major) {
      svg += `<path d="M${axisX} ${ty - 3}l8 3-8 3z" class="tick-mark"/>`;
      if (!plot.covered.includes(t)) svg += text(axisX + 10, ty + 4, (t / 10).toFixed(2), "tick-label");
    } else {
      svg += line(axisX, ty, axisX + 4, ty, "axis");
    }
  }
  for (const [, x] of days) svg += line(x + 0.5, plot.top, x + 0.5, plot.bottom, "grid-v");
}
const difference = [0, 1.925, 1.823, 1.782, 2.418, 0.85];
svg += `<polygon points="${days[0][1]},${plots[1].zero} ${path(plots[1], difference)} ${days[5][1]},${plots[1].zero}" class="area"/>`;
svg += `<polyline points="${path(plots[1], difference)}" class="series" stroke="#fff"/>`;
svg += `<polyline points="${path(plots[0], [0, 1.734, 1.31, 1.615, 1.68, 0.6221])}" class="series" stroke="#fff"/>`;
svg += `<polyline points="${path(plots[0], [0, -0.19, -0.51, -0.165, -0.74, -0.2279])}" class="series" stroke="#e8562a"/>`;
svg += `<rect x="1" y="448" width="1709" height="4" class="split"/>`;
svg += line(axisX + 0.5, 0, axisX + 0.5, 448, "axis") + line(axisX + 0.5, 452, axisX + 0.5, 899, "axis") + line(2, 899.5, axisX, 899.5, "axis");
svg += `<rect x="1450" y="2" width="195" height="43" class="legend"/><rect x="1460" y="11" width="10" height="10" fill="#fff"/><rect x="1460" y="27" width="10" height="10" fill="#ff5a28"/>`;
svg += text(1476, 20, "VALUE FUND 2", "legend-text") + text(1627, 20, "0.6221", "legend-text", "end");
svg += text(1476, 36, "NZSE50FF INDEX", "legend-text") + text(1629, 36, "-0.2279", "legend-text", "end");
svg += `<rect x="1407" y="454" width="238" height="26" class="legend"/><rect x="1417" y="462" width="10" height="10" fill="#fff"/>`;
svg += text(1433, 471, "Performance Difference", "legend-text") + text(1627, 471, "0.8500", "legend-text", "end");
svg += tag(plots[0], 0.6221, "#fff", "#222") + tag(plots[0], -0.2279, "#ff5a28", "#3a1004") + tag(plots[1], 0.85, "#fff", "#222");
for (const [label, x] of days) svg += text(x, 920, label, "tick-label", "middle") + line(x + 0.5, 900, x + 0.5, 904, "axis");
svg += text(735, 935, "Jan 2025", "tick-label", "middle") + text(1556, 935, "Feb 2025", "tick-label", "middle") + line(1468.5, 922, 1468.5, 937, "axis");
document.getElementById("chart").innerHTML = svg;
```
